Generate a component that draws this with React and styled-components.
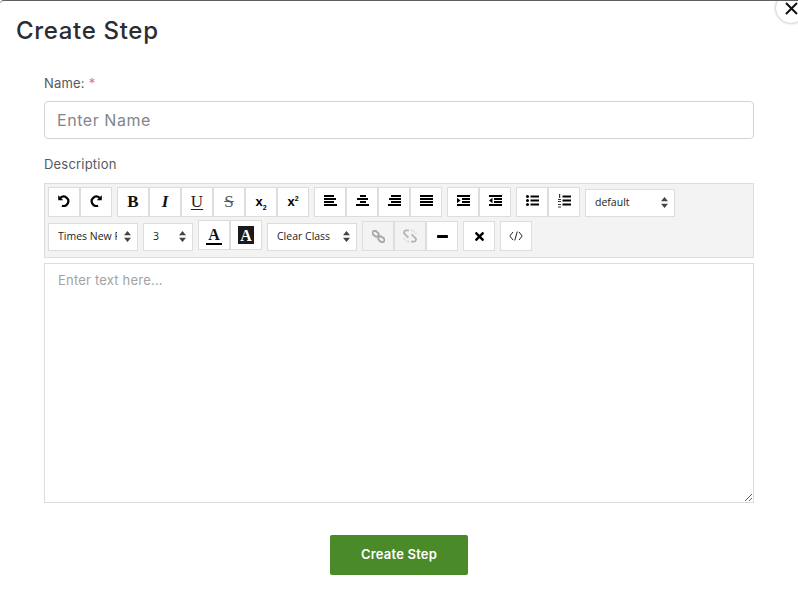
import React from 'react';
import styled, {createGlobalStyle} from 'styled-components';
import {FaTimes} from 'react-icons/fa';

const GlobalStyle = createGlobalStyle`
  html, body {
    margin: 0;
    padding: 0;
    background: #ffffff;
  }

  body {
    font-family: "Inter", "Liberation Sans", sans-serif;
    color: #212529;
  }
`;

const Modal = styled.div`
  position: relative;
  box-sizing: border-box;
  width: 798px;
  height: 610px;
  overflow: hidden;
  background: #ffffff;
  border-top: 1px solid #5f5f5f;
  border-top-left-radius: 4px;
`;

const CloseButton = styled.button`
  position: absolute;
  top: -8px;
  right: -8px;
  display: flex;
  align-items: center;
  justify-content: center;
  width: 30px;
  height: 30px;
  padding: 0;
  border: none;
  border-radius: 50%;
  background: #ffffff;
  box-shadow: 0 0 3px rgba(0, 0, 0, 0.4);
`;

const Title = styled.h2`
  margin: 0;
  padding: 15px 16px 0;
  font-size: 24px;
  font-weight: 500;
  line-height: 30px;
  letter-spacing: 0.68px;
  color: #2a2d31;
`;

const Form = styled.form`
  padding: 28px 44px 0;
`;

const Label = styled.label`
  display: block;
  font-size: 13px;
  font-weight: 400;
  line-height: 18px;
  letter-spacing: 0.2px;
  color: #555a60;
  margin-bottom: ${(props) => props.$gap}px;
`;

const Required = styled.span`
  color: #e8766f;
`;

const NameField = styled.input`
  display: block;
  box-sizing: border-box;
  width: 100%;
  height: 38px;
  margin-bottom: 16px;
  padding: 0 12px;
  border: 1px solid #ced4da;
  border-radius: 4px;
  font-family: inherit;
  font-size: 16px;
  letter-spacing: 0.55px;

  &::placeholder {
    color: #82868c;
    opacity: 1;
  }
`;

const Toolbar = styled.div`
  box-sizing: border-box;
  width: 710px;
  height: 75px;
  padding: 3px 3px 0;
  background: #f3f3f3;
  border: 1px solid #dddddd;
`;

const Row = styled.div`
  display: flex;
  align-items: flex-end;
  gap: 5px;
  margin-bottom: 3px;
`;

const Group = styled.div`
  display: flex;
  margin-bottom: ${(props) => props.$lift || 0}px;
`;

const ToolButton = styled.button`
  display: flex;
  align-items: center;
  justify-content: center;
  box-sizing: border-box;
  width: 32px;
  height: 30px;
  padding: 0 0 ${(props) => props.$raise || 0}px;
  background: ${(props) => (props.disabled ? '#f3f3f3' : '#ffffff')};
  border: 1px solid #dddddd;
  color: #000000;
`;

const SerifLetter = styled.span`
  font-family: "Liberation Serif", serif;
  font-size: 17px;
  font-weight: ${(props) => (props.$underline ? 'normal' : 'bold')};
  font-style: ${(props) => (props.$italic ? 'italic' : 'normal')};
  text-decoration: ${(props) => (props.$underline ? 'underline' : 'none')};
  text-decoration-thickness: 1px;
  text-underline-offset: 2px;
  line-height: 16px;
  color: ${(props) => (props.$underline ? '#222222' : '#111111')};
`;

const StruckLetter = styled.span`
  font-family: "Liberation Serif", serif;
  font-size: 17px;
  line-height: 16px;
  color: #555555;
  text-decoration: line-through;
`;

const ScriptLetter = styled.span`
  font-family: "Liberation Sans", sans-serif;
  font-size: 13px;
  font-weight: bold;
  line-height: 16px;

  sub, sup {
    font-size: 7px;
    line-height: 0;
  }
`;

const ColorSwatch = styled.span`
  display: flex;
  align-items: center;
  justify-content: center;
  font-family: "Liberation Serif", serif;
  font-size: 16px;
  font-weight: bold;
  line-height: 15px;
  color: ${(props) => (props.$dark ? '#ffffff' : '#111111')};
  background: ${(props) => (props.$dark ? '#1a1a1a' : 'transparent')};
  width: 16px;
  height: 18px;
  border-bottom: ${(props) => (props.$dark ? 'none' : '2px solid #000000')};
`;

const SelectWrap = styled.div`
  position: relative;
  width: ${(props) => props.$width}px;
  height: 28px;
`;

const Select = styled.select`
  box-sizing: border-box;
  width: 100%;
  height: 100%;
  padding: 0 20px 2px 9px;
  appearance: none;
  background: #ffffff;
  border: 1px solid #dddddd;
  border-radius: 0;
  font-family: "Open Sans", "Liberation Sans", sans-serif;
  font-size: 10.5px;
  color: #222222;
`;

const SelectArrows = styled.svg`
  position: absolute;
  top: 8px;
  right: 7px;
  width: 7px;
  height: 11px;
  pointer-events: none;
`;

const Editor = styled.textarea`
  display: block;
  box-sizing: border-box;
  width: 710px;
  height: 240px;
  margin-top: 5px;
  padding: 7px 13px;
  border: 1px solid #dddddd;
  border-radius: 0;
  font-family: inherit;
  font-size: 13px;
  line-height: 18px;
  letter-spacing: 0.2px;
  outline: none;

  &::placeholder {
    color: #a3a3a3;
    opacity: 1;
  }
`;

const Footer = styled.div`
  display: flex;
  justify-content: center;
  margin-top: 32px;
`;

const SubmitButton = styled.button`
  width: 138px;
  height: 40px;
  padding: 0 0 2px;
  border: none;
  border-radius: 2px;
  background: #4a8a29;
  color: #ffffff;
  font-family: inherit;
  font-size: 13px;
  font-weight: 600;
  letter-spacing: 0.2px;
`;

// horizontal text lines of the align buttons, each row is [x, width]
const Lines = ({rows}) => (
  <svg width="13" height="11" viewBox="0 0 13 11" fill="#000000">
    {rows.map(([x, w], i) => (
      <rect key={i} x={x} y={i * 3} width={w} height="2" />
    ))}
  </svg>
);

const Indent = ({outdent}) => (
  <svg width="13" height="11" viewBox="0 0 13 11" fill="#000000">
    <rect x="0" y="0" width="13" height="2" />
    <rect x="5" y="3" width="8" height="2" />
    <rect x="5" y="6" width="8" height="2" />
    <rect x="0" y="9" width="13" height="2" />
    <path d={outdent ? 'M3.5 2.8v5.4L0 5.5z' : 'M0 2.8v5.4l3.5-2.7z'} />
  </svg>
);

const BulletList = () => (
  <svg width="13" height="11" viewBox="0 0 13 11" fill="#000000">
    <circle cx="1.5" cy="1.5" r="1.5" />
    <circle cx="1.5" cy="5.5" r="1.5" />
    <circle cx="1.5" cy="9.5" r="1.5" />
    <rect x="4.5" y="0.5" width="8.5" height="2" />
    <rect x="4.5" y="4.5" width="8.5" height="2" />
    <rect x="4.5" y="8.5" width="8.5" height="2" />
  </svg>
);

const NumberList = () => (
  <svg width="13" height="14" viewBox="0 0 13 14" fill="#333333">
    <rect x="1" y="0" width="1.2" height="4" />
    <rect x="0" y="5" width="3" height="1" />
    <rect x="0" y="7" width="3" height="1" />
    <rect x="0" y="10" width="3" height="1" />
    <rect x="0" y="12.5" width="3" height="1" />
    <g fill="#000000">
      <rect x="4.5" y="1.5" width="8.5" height="2" />
      <rect x="4.5" y="5.5" width="8.5" height="2" />
      <rect x="4.5" y="9.5" width="8.5" height="2" />
    </g>
  </svg>
);

// round arrow of the undo and redo buttons, mirrored for redo
const TurnArrow = ({redo}) => (
  <svg width="12" height="12" viewBox="0 0 11 11" fill="none" stroke="#000000" strokeWidth="2" transform={redo ? 'scale(-1 1)' : undefined}>
    <path d="M2.2 2.6A4.3 4.3 0 1 1 3.6 9.8" />
    <path d="M0.2 0.2v4.6h4.6z" fill="#000000" stroke="none" />
  </svg>
);

const LinkIcon = () => (
  <svg width="13" height="13" viewBox="0 0 13 13" fill="none" stroke="#a8a8a8" strokeWidth="1.9">
    <rect x="0.3" y="1.5" width="6.6" height="4.4" rx="2.2" transform="rotate(40 3.6 3.7)" />
    <rect x="6.1" y="7.1" width="6.6" height="4.4" rx="2.2" transform="rotate(40 9.4 9.3)" />
  </svg>
);

const UnlinkIcon = () => (
  <svg width="14" height="14" viewBox="0 0 13 13" fill="none" stroke="#b4b4b4" strokeWidth="1.7">
    <path d="M5.5 1.3H3.4A2 2 0 0 0 2 5l3 3" />
    <path d="M7.5 11.7h2.1A2 2 0 0 0 11 8L8 5" />
    <path d="M8 0.3v2M10.5 1.3L9.5 3M12.7 4h-2M0.3 9h2M2.5 12l1-1.5M5 12.7v-2" strokeWidth="0.8" stroke="#cccccc" />
  </svg>
);

const RuleIcon = () => (
  <svg width="11" height="3" viewBox="0 0 11 3" fill="#000000">
    <rect width="11" height="3" rx="0.8" />
  </svg>
);

const CodeTag = () => (
  <svg width="14" height="10" viewBox="0 0 14 10" fill="none" stroke="#222222" strokeWidth="1">
    <path d="M4 1L0.8 5L4 9M10 1l3.2 4L10 9M8.3 0.5L5.7 9.5" />
  </svg>
);

const CloseIcon = () => (
  <svg width="13" height="13" viewBox="0 0 13 13" fill="none" stroke="#111111" strokeWidth="2">
    <path d="M1 1l11 11M12 1L1 12" />
  </svg>
);

const PickSelect = ({width, value}) => (
  <SelectWrap $width={width}>
    <Select defaultValue={value}>
      <option>{value}</option>
    </Select>
    <SelectArrows viewBox="0 0 7 11" fill="#444444">
      <path d="M3.5 0L7 4.3H0zM3.5 11L0 6.7h7z" />
    </SelectArrows>
  </SelectWrap>
);

const App = () => (
  <Modal>
    <GlobalStyle />
    <CloseButton type="button"><CloseIcon /></CloseButton>
    <Title>Create Step</Title>
    <Form>
      <Label htmlFor="name" $gap={9}>Name: <Required>*</Required></Label>
      <NameField id="name" placeholder="Enter Name" />
      <Label htmlFor="description" $gap={10}>Description</Label>
      <Toolbar>
        <Row>
          <Group>
            <ToolButton type="button" $raise={2}><TurnArrow /></ToolButton>
            <ToolButton type="button" $raise={2}><TurnArrow redo /></ToolButton>
          </Group>
          <Group>
            <ToolButton type="button"><SerifLetter>B</SerifLetter></ToolButton>
            <ToolButton type="button"><SerifLetter $italic>I</SerifLetter></ToolButton>
            <ToolButton type="button"><SerifLetter $underline>U</SerifLetter></ToolButton>
            <ToolButton type="button"><StruckLetter>S</StruckLetter></ToolButton>
            <ToolButton type="button"><ScriptLetter>x<sub>2</sub></ScriptLetter></ToolButton>
            <ToolButton type="button"><ScriptLetter>x<sup>2</sup></ScriptLetter></ToolButton>
          </Group>
          <Group>
            <ToolButton type="button" $raise={3}><Lines rows={[[0, 10], [0, 12], [0, 10], [0, 13]]} /></ToolButton>
            <ToolButton type="button" $raise={3}><Lines rows={[[4, 6], [1, 11], [4, 6], [0, 13]]} /></ToolButton>
            <ToolButton type="button" $raise={3}><Lines rows={[[3, 10], [1, 12], [3, 10], [0, 13]]} /></ToolButton>
            <ToolButton type="button" $raise={3}><Lines rows={[[0, 13], [0, 13], [0, 13], [0, 13]]} /></ToolButton>
          </Group>
          <Group>
            <ToolButton type="button" $raise={3}><Indent /></ToolButton>
            <ToolButton type="button" $raise={3}><Indent outdent /></ToolButton>
          </Group>
          <Group>
            <ToolButton type="button" $raise={3}><BulletList /></ToolButton>
            <ToolButton type="button" $raise={3}><NumberList /></ToolButton>
          </Group>
          <PickSelect width={90} value="default" />
        </Row>
        <Row>
          <PickSelect width={90} value="Times New Roman" />
          <PickSelect width={50} value="3" />
          <Group $lift={1}>
            <ToolButton type="button"><ColorSwatch>A</ColorSwatch></ToolButton>
            <ToolButton type="button"><ColorSwatch $dark>A</ColorSwatch></ToolButton>
          </Group>
          <PickSelect width={90} value="Clear Class" />
          <Group>
            <ToolButton type="button" disabled><LinkIcon /></ToolButton>
            <ToolButton type="button" disabled><UnlinkIcon /></ToolButton>
            <ToolButton type="button"><RuleIcon /></ToolButton>
          </Group>
          <ToolButton type="button"><FaTimes size={13} /></ToolButton>
          <ToolButton type="button"><CodeTag /></ToolButton>
        </Row>
      </Toolbar>
      <Editor id="description" placeholder="Enter text here..." />
      <Footer>
        <SubmitButton type="button">Create Step</SubmitButton>
      </Footer>
    </Form>
  </Modal>
);

export default App;
